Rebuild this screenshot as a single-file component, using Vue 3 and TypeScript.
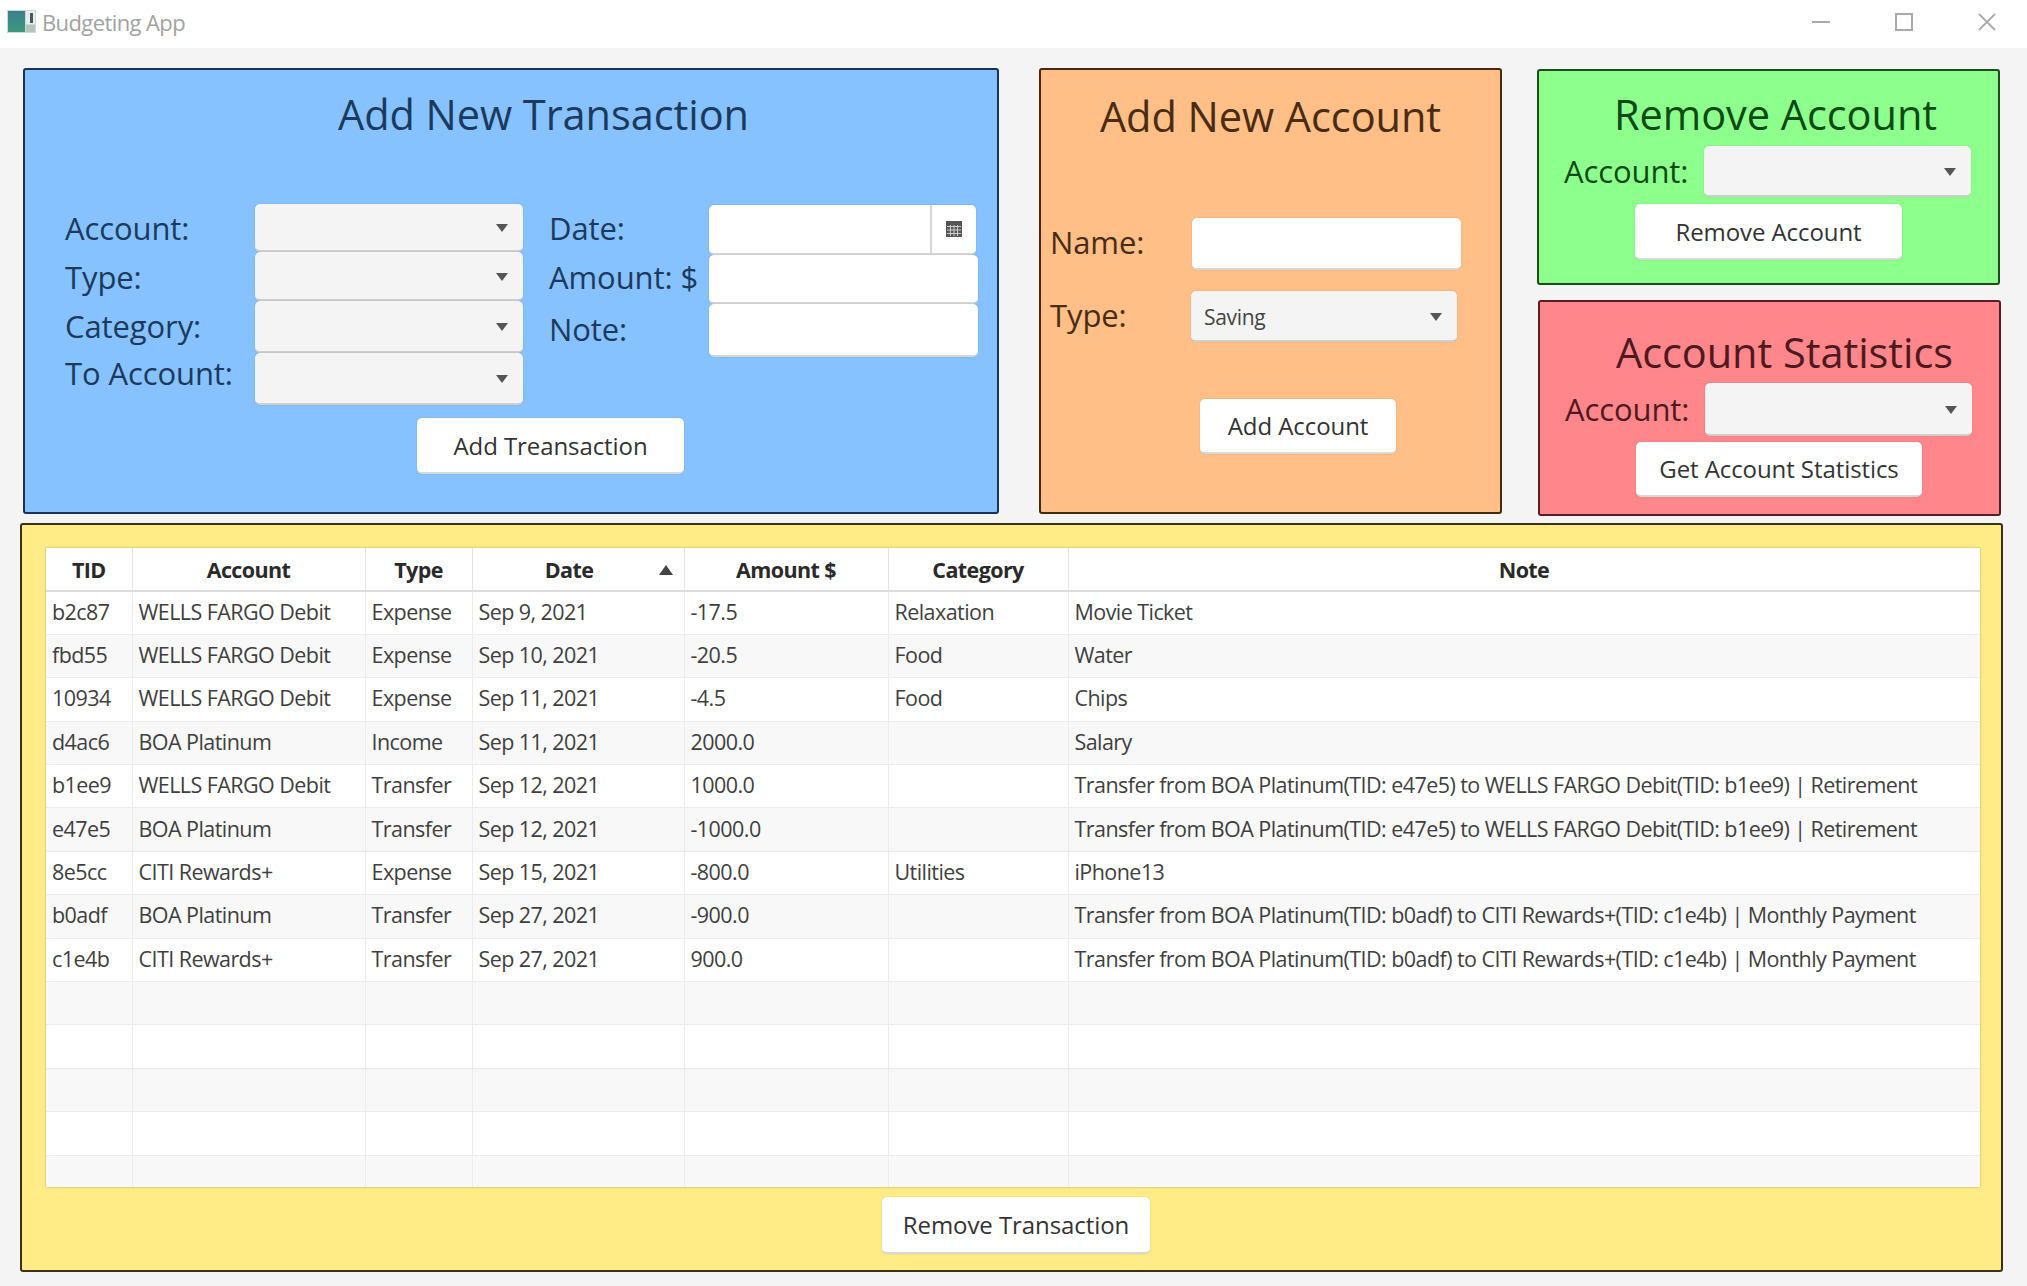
<script setup lang="ts">
interface Tx { tid: string; account: string; type: string; date: string; amount: string; category: string; note: string }
const fm = 'WELLS FARGO Debit'
const boa = 'BOA Platinum'
const citi = 'CITI Rewards+'
const retire = 'Transfer from BOA Platinum(TID: e47e5) to WELLS FARGO Debit(TID: b1ee9) | Retirement'
const monthly = 'Transfer from BOA Platinum(TID: b0adf) to CITI Rewards+(TID: c1e4b) | Monthly Payment'
const rows: Tx[] = [
  { tid: 'b2c87', account: fm, type: 'Expense', date: 'Sep 9, 2021', amount: '-17.5', category: 'Relaxation', note: 'Movie Ticket' },
  { tid: 'fbd55', account: fm, type: 'Expense', date: 'Sep 10, 2021', amount: '-20.5', category: 'Food', note: 'Water' },
  { tid: '10934', account: fm, type: 'Expense', date: 'Sep 11, 2021', amount: '-4.5', category: 'Food', note: 'Chips' },
  { tid: 'd4ac6', account: boa, type: 'Income', date: 'Sep 11, 2021', amount: '2000.0', category: '', note: 'Salary' },
  { tid: 'b1ee9', account: fm, type: 'Transfer', date: 'Sep 12, 2021', amount: '1000.0', category: '', note: retire },
  { tid: 'e47e5', account: boa, type: 'Transfer', date: 'Sep 12, 2021', amount: '-1000.0', category: '', note: retire },
  { tid: '8e5cc', account: citi, type: 'Expense', date: 'Sep 15, 2021', amount: '-800.0', category: 'Utilities', note: 'iPhone13' },
  { tid: 'b0adf', account: boa, type: 'Transfer', date: 'Sep 27, 2021', amount: '-900.0', category: '', note: monthly },
  { tid: 'c1e4b', account: citi, type: 'Transfer', date: 'Sep 27, 2021', amount: '900.0', category: '', note: monthly },
]
const blanks = [1, 2, 3, 4, 5]
const widths = [86, 233, 107, 212, 204, 180, 912]
const headers = ['TID', 'Account', 'Type', 'Date', 'Amount $', 'Category', 'Note']
</script>

<template>
  <div class="app">
    <header class="titlebar">
      <svg class="appicon" viewBox="0 0 29 23" width="29" height="23">
        <defs>
          <linearGradient id="icofill" x1="0" y1="0" x2="0" y2="1">
            <stop offset="0" stop-color="#3d7f8c" />
            <stop offset="1" stop-color="#3a9a7c" />
          </linearGradient>
        </defs>
        <rect width="29" height="23" fill="#cfd8d6" />
        <rect x="1" y="1" width="17" height="21" fill="url(#icofill)" />
        <rect x="19" y="1" width="9" height="13" fill="#e8eeec" />
        <rect x="23" y="3" width="3" height="10" fill="#4a5a58" />
        <rect x="19" y="15" width="9" height="7" fill="#b4c6c0" />
      </svg>
      <span class="apptitle">Budgeting App</span>
      <div class="winctl">
        <svg viewBox="0 0 20 20" width="20" height="20"><path d="M1 10h18" stroke="#aaa" stroke-width="2" /></svg>
        <svg viewBox="0 0 20 20" width="20" height="20"><rect x="2" y="2" width="16" height="16" fill="none" stroke="#aaa" stroke-width="2" /></svg>
        <svg viewBox="0 0 20 20" width="20" height="20"><path d="M2 2l16 16M18 2L2 18" stroke="#aaa" stroke-width="1.8" fill="none" /></svg>
      </div>
    </header>

    <section class="top">
      <div class="panel blue">
        <h1 class="title">Add New Transaction</h1>
        <div class="txform">
          <div class="txcol">
            <div class="row r1"><label class="lbl l1">Account:</label><div class="combo"><i class="caret"></i></div></div>
            <div class="row r2"><label class="lbl l1">Type:</label><div class="combo"><i class="caret"></i></div></div>
            <div class="row r3"><label class="lbl l1 up1">Category:</label><div class="combo"><i class="caret"></i></div></div>
            <div class="row r3"><label class="lbl l1 lift">To Account:</label><div class="combo"><i class="caret"></i></div></div>
          </div>
          <div class="txcol second">
            <div class="row r4">
              <label class="lbl l2">Date:</label>
              <div class="field date">
                <span class="calbtn">
                  <svg viewBox="0 0 16 16" width="16" height="16">
                    <rect x="0" y="0" width="16" height="16" fill="#555" />
                    <path d="M1 5.5h14M1 9h14M1 12.5h14M4.5 4v11M8 4v11M11.5 4v11" stroke="#ccc" stroke-width="1" />
                  </svg>
                </span>
              </div>
            </div>
            <div class="row r2"><label class="lbl l2">Amount: $</label><div class="field"></div></div>
            <div class="row r5"><label class="lbl l2 note">Note:</label><div class="field"></div></div>
          </div>
        </div>
        <button class="btn add-tx">Add Treansaction</button>
      </div>

      <div class="panel orange">
        <h1 class="title">Add New Account</h1>
        <div class="row name-row"><label class="lbl l3 up4">Name:</label><div class="field f3"></div></div>
        <div class="row type-row">
          <label class="lbl l3 up3">Type:</label>
          <div class="combo c3"><span class="value">Saving</span><i class="caret"></i></div>
        </div>
        <button class="btn add-acc">Add Account</button>
      </div>

      <div class="stack">
        <div class="panel green">
          <h1 class="title">Remove Account</h1>
          <div class="row side-row"><label class="lbl l4 up1">Account:</label><div class="combo c4"><i class="caret"></i></div></div>
          <button class="btn rm-acc">Remove Account</button>
        </div>
        <div class="panel red">
          <h1 class="title">Account Statistics</h1>
          <div class="row side-row"><label class="lbl l4 up1">Account:</label><div class="combo c4"><i class="caret"></i></div></div>
          <button class="btn stats">Get Account Statistics</button>
        </div>
      </div>
    </section>

    <section class="panel yellow">
      <div class="tablewrap">
        <table>
          <colgroup><col v-for="w in widths" :key="w" :style="{ width: w + 'px' }" /></colgroup>
          <thead>
            <tr>
              <th v-for="h in headers" :key="h" :class="{ sorted: h === 'Date' }">
                {{ h }}<i v-if="h === 'Date'" class="sort"></i>
              </th>
            </tr>
          </thead>
          <tbody>
            <tr v-for="r in rows" :key="r.tid">
              <td>{{ r.tid }}</td><td>{{ r.account }}</td><td>{{ r.type }}</td><td>{{ r.date }}</td>
              <td>{{ r.amount }}</td><td>{{ r.category }}</td><td>{{ r.note }}</td>
            </tr>
            <tr v-for="b in blanks" :key="b"><td v-for="w in widths" :key="w"></td></tr>
          </tbody>
        </table>
      </div>
      <button class="btn rm-tx">Remove Transaction</button>
    </section>
  </div>
</template>

<style>
html, body { margin: 0; background: #f4f4f4; }
</style>

<style scoped>
.app {
  width: 2027px;
  height: 1286px;
  background: #f4f4f4;
  font-family: "Open Sans", "Noto Sans", sans-serif;
  overflow: hidden;
  box-sizing: border-box;
}
.titlebar {
  height: 48px;
  background: #fff;
  display: flex;
  align-items: center;
  padding-left: 7px;
  box-sizing: border-box;
}
.appicon { margin-right: 6px; margin-top: -5px; }
.apptitle { font-size: 22px; color: #a2a2a2; margin-top: -4px; letter-spacing: -0.6px; }
.winctl { margin-left: auto; display: flex; gap: 63px; padding-right: 30px; margin-top: -5px; }

.top { display: flex; margin-top: 20px; padding-left: 23px; height: 455px; }
.panel { border: 2px solid #333; border-radius: 3px; box-sizing: border-box; }
.title {
  margin: 0;
  font-weight: 400;
  font-size: 41.5px;
  line-height: 60px;
  letter-spacing: -0.05px;
  text-align: center;
  white-space: nowrap;
}
.lbl { font-size: 31px; letter-spacing: -0.1px; white-space: nowrap; display: block; }
.up1 { margin-top: -2px; }
.up3 { margin-top: -3px; }
.up4 { margin-top: -4px; }
.row { display: flex; align-items: center; }

.blue { width: 976px; height: 446px; background: #86c2ff; border-color: #18335a; color: #1c3a5e; }
.blue .title { margin-top: 14px; padding-left: 65px; }
.txform { display: flex; margin-top: 60px; padding-left: 40px; }
.txcol.second { margin-left: 27px; }
.r1 { height: 48px; }
.r2 { height: 49px; }
.r3 { height: 52px; }
.r4 { height: 50px; margin-top: 1px; }
.r5 { height: 53px; }
.l1 { width: 190px; }
.l2 { width: 159px; margin-top: -5px; margin-left: -1px; margin-right: 1px; }
.l2.note { margin-top: -3px; }
.lift { margin-top: -12px; }
.combo {
  position: relative;
  width: 268px;
  height: 100%;
  background: #f4f4f4;
  border-radius: 5px;
  border-bottom: 2px solid #cfcfcf;
  box-sizing: border-box;
  display: flex;
  align-items: center;
  box-shadow: 0 0 2px rgba(0, 0, 0, 0.12);
}
.caret {
  position: absolute;
  right: 15px;
  top: 50%;
  margin-top: -3px;
  width: 0;
  height: 0;
  border-left: 6px solid transparent;
  border-right: 6px solid transparent;
  border-top: 8px solid #555;
}
.field {
  width: 269px;
  height: 100%;
  background: #fff;
  border-radius: 5px;
  border-bottom: 2px solid #d6d6d6;
  box-sizing: border-box;
  position: relative;
  box-shadow: 0 0 2px rgba(0, 0, 0, 0.12);
}
.field.date { width: 267px; display: flex; justify-content: flex-end; }
.calbtn {
  width: 46px;
  border-left: 2px solid #d6d6d6;
  box-sizing: border-box;
  display: flex;
  align-items: center;
  justify-content: center;
}
.btn {
  display: block;
  background: #fff;
  border: 0;
  border-bottom: 2px solid #d8d8d8;
  border-radius: 5px;
  box-sizing: border-box;
  padding: 0;
  font-family: inherit;
  font-size: 24px;
  letter-spacing: -0.08px;
  color: #333;
  white-space: nowrap;
  box-shadow: 0 0 2px rgba(0, 0, 0, 0.14);
}
.add-tx { width: 267px; height: 56px; margin: 13px 0 0 392px; }

.orange { width: 463px; height: 446px; margin-left: 40px; background: #ffbf87; border-color: #47290f; color: #4a2c14; }
.orange .title { margin-top: 16px; }
.name-row { height: 52px; margin-top: 72px; padding-left: 9px; }
.type-row { height: 51px; margin-top: 21px; padding-left: 9px; }
.l3 { width: 142px; }
.f3 { width: 269px; }
.c3 { width: 266px; margin-left: -1px; }
.value { font-size: 21px; letter-spacing: -0.3px; color: #444; margin-left: 13px; margin-top: 2px; }
.add-acc { width: 196px; height: 55px; margin: 57px 0 0 159px; }

.stack { margin-left: 35px; display: flex; flex-direction: column; width: 465px; padding-top: 1px; }
.green { width: 463px; height: 216px; background: #8cff8c; border-color: #1d4d1d; color: #0e4a14; }
.green .title { margin-top: 13px; padding-left: 14px; }
.side-row { height: 51px; padding-left: 25px; }
.green .side-row { margin-top: 2px; }
.l4 { width: 140px; }
.c4 { width: 267px; }
.rm-acc { width: 267px; height: 56px; margin: 7px 0 0 96px; }
.red { width: 463px; height: 216px; margin: 15px 0 0 1px; background: #ff878c; border-color: #5a1f24; color: #4e1a20; }
.red .title { margin-top: 20px; padding-left: 30px; }
.red .side-row { height: 53px; margin-top: 1px; }
.stats { width: 286px; height: 55px; margin: 6px 0 0 96px; }

.yellow {
  width: 1983px;
  height: 749px;
  margin: 0 0 0 20px;
  background: #ffec87;
  border-color: #38321a;
  padding: 23px 0 0 24px;
}
.tablewrap { width: 1934px; height: 639px; overflow: hidden; background: #fff; box-shadow: 0 0 2px rgba(90, 90, 70, 0.5); }
table { border-collapse: collapse; table-layout: fixed; width: 1934px; font-size: 21.5px; letter-spacing: -0.56px; color: #3f3f3f; }
th {
  height: 42px;
  padding: 0;
  font-weight: 700;
  letter-spacing: -0.6px;
  color: #2a2a2a;
  background: #fff;
  border-bottom: 2px solid #ddd;
  border-right: 1px solid #e4e4e4;
  position: relative;
}
th.sorted { padding-right: 18px; }
.sort {
  position: absolute;
  right: 11px;
  top: 17px;
  width: 0;
  height: 0;
  border-left: 7px solid transparent;
  border-right: 7px solid transparent;
  border-bottom: 10px solid #444;
}
td {
  height: 43.4px;
  padding: 0 0 3px 6px;
  box-sizing: border-box;
  border-bottom: 1px solid #ececec;
  border-right: 1px solid #ececec;
  white-space: nowrap;
  overflow: hidden;
}
tbody tr:nth-child(even) td { background: #f8f8f8; }
.rm-tx { width: 268px; height: 57px; margin: 10px 0 0 836px; }
</style>
